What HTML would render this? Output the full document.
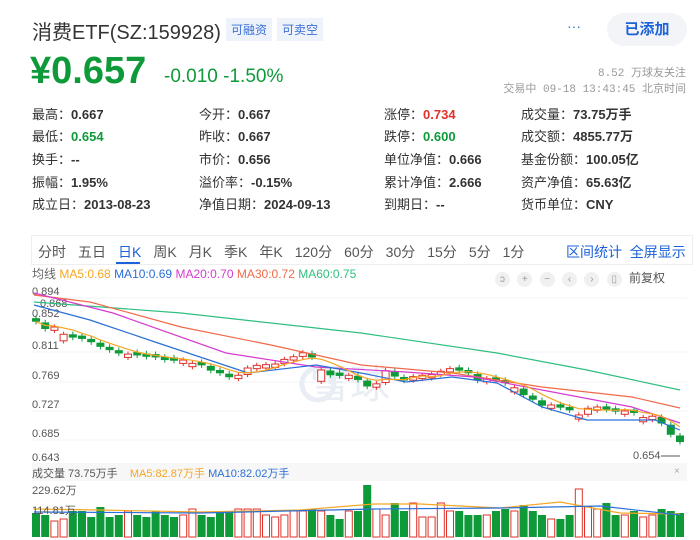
<!DOCTYPE html>
<html><head><meta charset="utf-8"><style>
*{margin:0;padding:0;box-sizing:border-box}
body{width:700px;height:540px;background:#fff;font-family:"Liberation Sans","Noto Sans CJK SC",sans-serif;color:#333;position:relative;overflow:hidden}
.a{position:absolute;white-space:nowrap}
.tag{background:#eef3fb;color:#3b6fd6;font-size:12px;padding:3px 5px}
.q{font-size:13px;color:#333}
.q b{font-weight:bold;color:#333}
.ic{display:inline-block;width:15px;height:15px;border-radius:50%;background:#f0f0f0;color:#999;font-size:10px;text-align:center;line-height:15px;margin-right:4px}
.tb span{margin-right:12px}
</style></head><body>
<div class="a" style="left:32px;top:16px;font-size:20px;color:#333">消费ETF(SZ:159928)</div>
<div class="a tag" style="left:226px;top:18px">可融资</div>
<div class="a tag" style="left:277px;top:18px">可卖空</div>
<div class="a" style="left:567px;top:18px;font-size:14px;color:#3b6fd6">···</div>
<div class="a" style="left:607px;top:13px;width:80px;height:33px;border-radius:17px;background:#f2f4f8;color:#1c62d8;font-size:15px;font-weight:bold;text-align:center;line-height:33px">已添加</div>
<div class="a" style="left:30px;top:50px;font-size:38px;font-weight:bold;color:#0f9a3a">¥0.657</div>
<div class="a" style="left:164px;top:66px;font-size:19px;color:#0f9a3a">-0.010 -1.50%</div>
<div class="a" style="right:14px;top:64px;font-size:11px;color:#999;font-family:'Liberation Mono','Noto Sans CJK SC',monospace">8.52 万球友关注</div>
<div class="a" style="right:14px;top:80px;font-size:11px;color:#999;font-family:'Liberation Mono','Noto Sans CJK SC',monospace">交易中 09-18 13:43:45 北京时间</div>

<div class="a q" style="left:32px;top:104px">最高：<b>0.667</b></div>
<div class="a q" style="left:32px;top:126px">最低：<b style="color:#0f9a3a">0.654</b></div>
<div class="a q" style="left:32px;top:149px">换手：<b>--</b></div>
<div class="a q" style="left:32px;top:172px">振幅：<b>1.95%</b></div>
<div class="a q" style="left:32px;top:194px">成立日：<b>2013-08-23</b></div>
<div class="a q" style="left:199px;top:104px">今开：<b>0.667</b></div>
<div class="a q" style="left:199px;top:126px">昨收：<b>0.667</b></div>
<div class="a q" style="left:199px;top:149px">市价：<b>0.656</b></div>
<div class="a q" style="left:199px;top:172px">溢价率：<b>-0.15%</b></div>
<div class="a q" style="left:199px;top:194px">净值日期：<b>2024-09-13</b></div>
<div class="a q" style="left:384px;top:104px">涨停：<b style="color:#e0312a">0.734</b></div>
<div class="a q" style="left:384px;top:126px">跌停：<b style="color:#0f9a3a">0.600</b></div>
<div class="a q" style="left:384px;top:149px">单位净值：<b>0.666</b></div>
<div class="a q" style="left:384px;top:172px">累计净值：<b>2.666</b></div>
<div class="a q" style="left:384px;top:194px">到期日：<b>--</b></div>
<div class="a q" style="left:521px;top:104px">成交量：<b>73.75万手</b></div>
<div class="a q" style="left:521px;top:126px">成交额：<b>4855.77万</b></div>
<div class="a q" style="left:521px;top:149px">基金份额：<b>100.05亿</b></div>
<div class="a q" style="left:521px;top:172px">资产净值：<b>65.63亿</b></div>
<div class="a q" style="left:521px;top:194px">货币单位：<b>CNY</b></div>

<div class="a" style="left:31px;top:235px;width:662px;height:30px;border:1px solid #eee;background:#fff"></div>
<div class="a tb" style="left:38px;top:242px;font-size:14px;color:#555"><span>分时</span><span>五日</span><span style="color:#1c62d8">日K</span><span>周K</span><span>月K</span><span>季K</span><span>年K</span><span>120分</span><span>60分</span><span>30分</span><span>15分</span><span>5分</span><span>1分</span></div>
<div class="a" style="left:116px;top:262px;width:24px;height:2px;background:#1c62d8"></div>
<div class="a" style="left:566px;top:242px;font-size:14px;color:#1c62d8">区间统计&nbsp;&nbsp;全屏显示</div>
<div class="a" style="left:32px;top:265px;font-size:12px;color:#666">均线 <span style="color:#f5a623">MA5:0.68</span> <span style="color:#2a6fd6">MA10:0.69</span> <span style="color:#d63bd0">MA20:0.70</span> <span style="color:#f06a4a">MA30:0.72</span> <span style="color:#2fbf7f">MA60:0.75</span></div>
<div class="a" style="left:495px;top:269px;font-size:12px;color:#555"><span class="ic">ↄ</span> <span class="ic">+</span> <span class="ic">−</span> <span class="ic">‹</span> <span class="ic">›</span> <span class="ic">▯</span> 前复权</div>

<svg class="a" style="left:0;top:280px" width="700" height="260" id="s"></svg>
<div class="a" style="left:32px;top:463px;width:655px;height:18px;background:#f7f7f7"></div>
<div class="a" style="left:32px;top:465px;font-size:11px;color:#555">成交量 73.75万手&nbsp;&nbsp;&nbsp;&nbsp;<span style="color:#f5a623">MA5:82.87万手</span> <span style="color:#2a6fd6">MA10:82.02万手</span></div>
<div class="a" style="left:674px;top:466px;font-size:10px;color:#aaa">×</div>
<div class="a" style="left:32px;top:482px;font-size:11px;color:#555">229.62万</div>
<div class="a" style="left:32px;top:502px;font-size:11px;color:#555">114.81万</div>
<script>
var s=document.getElementById('s'),h='';
function Y(p){return 290+(0.894-p)*661-280;}
[[0.894,290],[0.811,344],[0.769,374],[0.727,403],[0.685,432],[0.643,456]].forEach(function(a){
 h+='<line x1="32" x2="687" y1="'+(a[1]-280+8)+'" y2="'+(a[1]-280+8)+'" stroke="#f3f3f3"/>';
 h+='<text x="32" y="'+(a[1]-280+5)+'" font-size="11" fill="#555" font-family="Liberation Sans">'+a[0].toFixed(3)+'</text>';});
h+='<text x="40" y="27" font-size="11" fill="#555" font-family="Liberation Sans">0.868</text>';
h+='<text x="32" y="37" font-size="11" fill="#555" font-family="Liberation Sans">0.852</text>';
h+='<text x="633" y="179" font-size="11" fill="#555" font-family="Liberation Sans">0.654</text>';
h+='<line x1="661" x2="680" y1="176" y2="176" stroke="#555"/>';
h+='<text x="310" y="118" font-size="40" fill="#e9edf4" font-family="Noto Sans CJK SC">雪球</text>';
h+='<circle cx="318" cy="104" r="16" fill="none" stroke="#e9edf4" stroke-width="5"/>';
var c=[0.846,0.835,0.838,0.827,0.822,0.82,0.815,0.808,0.803,0.798,0.797,0.795,0.793,0.792,0.788,0.787,0.788,0.783,0.78,0.772,0.768,0.762,0.765,0.776,0.78,0.781,0.782,0.789,0.793,0.799,0.792,0.773,0.765,0.764,0.765,0.758,0.748,0.752,0.772,0.763,0.757,0.763,0.765,0.766,0.771,0.775,0.772,0.768,0.757,0.76,0.757,0.753,0.746,0.735,0.728,0.719,0.72,0.716,0.712,0.705,0.715,0.717,0.713,0.71,0.711,0.708,0.701,0.703,0.692,0.675,0.664];
var n=c.length,dx=(680-36)/(n-1),vol=[24,22,16,18,26,26,20,30,20,22,26,22,20,26,22,20,22,28,22,20,26,26,28,28,28,22,20,22,26,26,28,26,22,18,26,26,52,28,22,34,26,34,20,20,34,26,26,22,22,22,26,28,26,32,26,22,18,18,22,36,30,28,34,22,22,26,20,22,28,26,24];
var vb=537-280;
for(var i=0;i<n;i++){var x=36+i*dx,cl=c[i],prev=i?c[i-1]:0.852,up=cl>prev||(i%7==3);
 var d=Math.max(0.005,Math.abs(cl-prev)*0.9),o=up?cl-d:cl+d,col=up?'#e0312a':'#0f9a3a';
 var hi=Math.max(o,cl)+0.004,lo=Math.min(o,cl)-0.004;
 h+='<line x1="'+x+'" x2="'+x+'" y1="'+Y(hi)+'" y2="'+Y(lo)+'" stroke="'+col+'"/>';
 var t=Y(Math.max(o,cl)),bh=Math.abs(Y(o)-Y(cl));
 h+=up?'<rect x="'+(x-3.5)+'" y="'+t+'" width="7" height="'+bh+'" fill="#fff" stroke="'+col+'"/>':'<rect x="'+(x-4)+'" y="'+t+'" width="8" height="'+bh+'" fill="'+col+'"/>';
 var v=vol[i%vol.length]; if(i==59)v=48;
 h+=up?'<rect x="'+(x-3.5)+'" y="'+(vb-v)+'" width="7" height="'+v+'" fill="#fff" stroke="#e0312a"/>':'<rect x="'+(x-4)+'" y="'+(vb-v)+'" width="8" height="'+v+'" fill="#0f9a3a"/>';
}
function pl(p,col){h+='<polyline fill="none" stroke="'+col+'" stroke-width="1.2" points="'+p.map(function(a){return a[0]+','+(a[1]-280)}).join(' ')+'"/>';}
pl([[34,302],[181,313],[361,333],[497,353],[587,370],[680,390]],'#2fbf7f');
pl([[34,295],[90,302],[181,327],[271,345],[361,365],[452,373],[542,387],[632,397],[680,408]],'#f06a4a');
pl([[34,293],[113,313],[226,353],[316,367],[406,372],[474,377],[542,390],[632,407],[680,423]],'#d63bd0');
pl([[34,305],[90,320],[158,343],[248,373],[316,365],[361,373],[406,382],[452,377],[497,383],[542,407],[587,420],[655,420],[680,430]],'#2a6fd6');
var m=[];for(var i=0;i<n;i++){var a=0,k=0;for(var j=Math.max(0,i-4);j<=i;j++){a+=c[j];k++;}m.push([36+i*dx,Y(a/k)+280]);}pl(m,'#f5a623');
pl([[34,509],[100,510],[200,512],[300,510],[374,504],[420,504],[500,508],[560,502],[620,513],[680,514]],'#f5a623');
pl([[34,512],[200,513],[374,509],[500,508],[600,506],[680,515]],'#2a6fd6');
s.innerHTML=h;
</script>
</body></html>
